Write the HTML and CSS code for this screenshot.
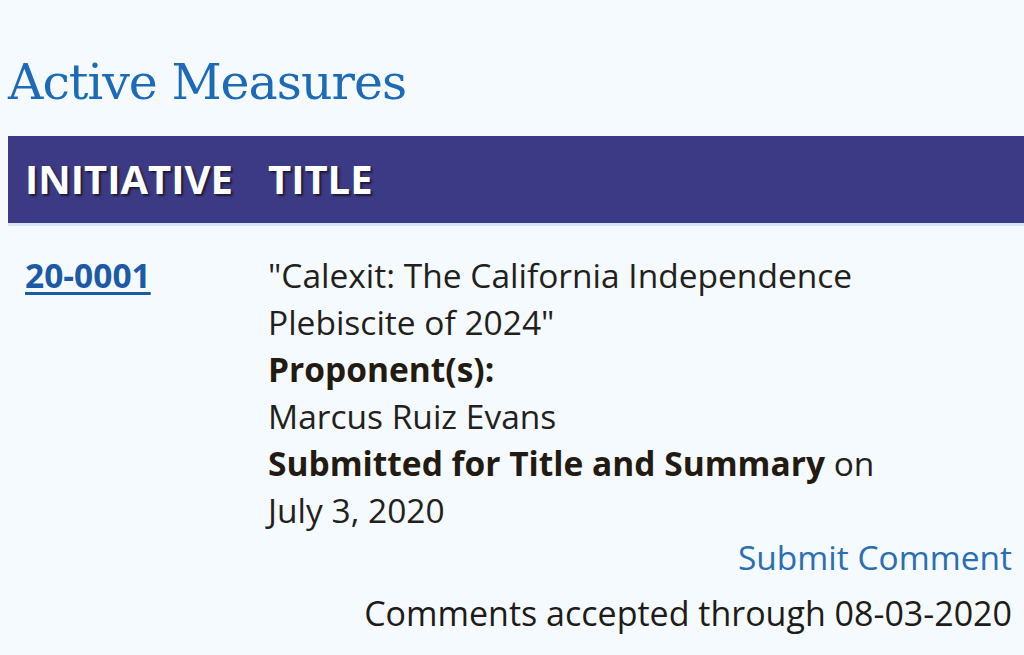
FILE: index.html
```html
<!DOCTYPE html>
<html lang="en">
<head>
<meta charset="utf-8">
<title>Active Measures</title>
<link rel="stylesheet" href="styles.css">
</head>
<body>
<main class="page">
  <h1 class="page-title">Active Measures</h1>
  <table class="measures">
    <colgroup>
      <col class="col-id-w">
      <col>
    </colgroup>
    <thead>
      <tr>
        <th>INITIATIVE</th>
        <th>TITLE</th>
      </tr>
    </thead>
    <tbody>
      <tr>
        <td><a class="measure-link" href="#">20-0001</a></td>
        <td>
          <div class="measure-name">"Calexit: The California Independence Plebiscite of 2024"</div>
          <div class="label">Proponent(s):</div>
          <div>Marcus Ruiz Evans</div>
          <div><span class="label">Submitted for Title and Summary</span> on <span class="nowrap">July 3, 2020</span></div>
          <div class="actions"><a class="comment-link" href="#">Submit Comment</a></div>
          <div class="actions deadline">Comments accepted through 08-03-2020</div>
        </td>
      </tr>
    </tbody>
  </table>
</main>
</body>
</html>
```
FILE: styles.css
```css
html, body {
  margin: 0;
  padding: 0;
  background: #f5faff;
}
body {
  padding-left: 8px;
  overflow: hidden;
}
.page {
  width: 1016px;
}
.page-title {
  margin: 0;
  padding-top: 48px;
  font-family: "DejaVu Serif", "Liberation Serif", serif;
  font-weight: normal;
  font-size: 49px;
  line-height: 70px;
  color: #1d6bb6;
  letter-spacing: -1px;
}
.measures {
  width: 100%;
  margin-top: 18px;
  border-collapse: collapse;
  table-layout: fixed;
  font-family: "Open Sans", "Noto Sans", sans-serif;
}
.col-id-w {
  width: 243px;
}
.measures th {
  background: #3d3a85;
  color: #ffffff;
  font-size: 40px;
  font-weight: 700;
  text-align: left;
  padding: 16px 0 17px 17px;
  line-height: 54px;
  text-shadow: 2px 2px 2px #1c1a3a;
  border-bottom: 3px solid #d7e6f7;
  vertical-align: middle;
}
.measures td {
  vertical-align: top;
  font-size: 33.5px;
  line-height: 47px;
  color: #231f1c;
  padding: 26px 12px 0 17px;
}
.measure-name {
  max-width: 700px;
}
.measure-link {
  color: #1d5aa6;
  font-weight: 700;
  text-decoration: underline;
  text-underline-offset: 4px;
  text-decoration-thickness: 3px;
}
.label {
  font-weight: 700;
  color: #231a12;
}
.nowrap {
  white-space: nowrap;
}
.actions {
  text-align: right;
}
.deadline {
  margin-top: 9px;
  font-size: 34px;
  color: #1e1b18;
}
.comment-link {
  color: #2a6eb4;
  text-decoration: none;
}
```
